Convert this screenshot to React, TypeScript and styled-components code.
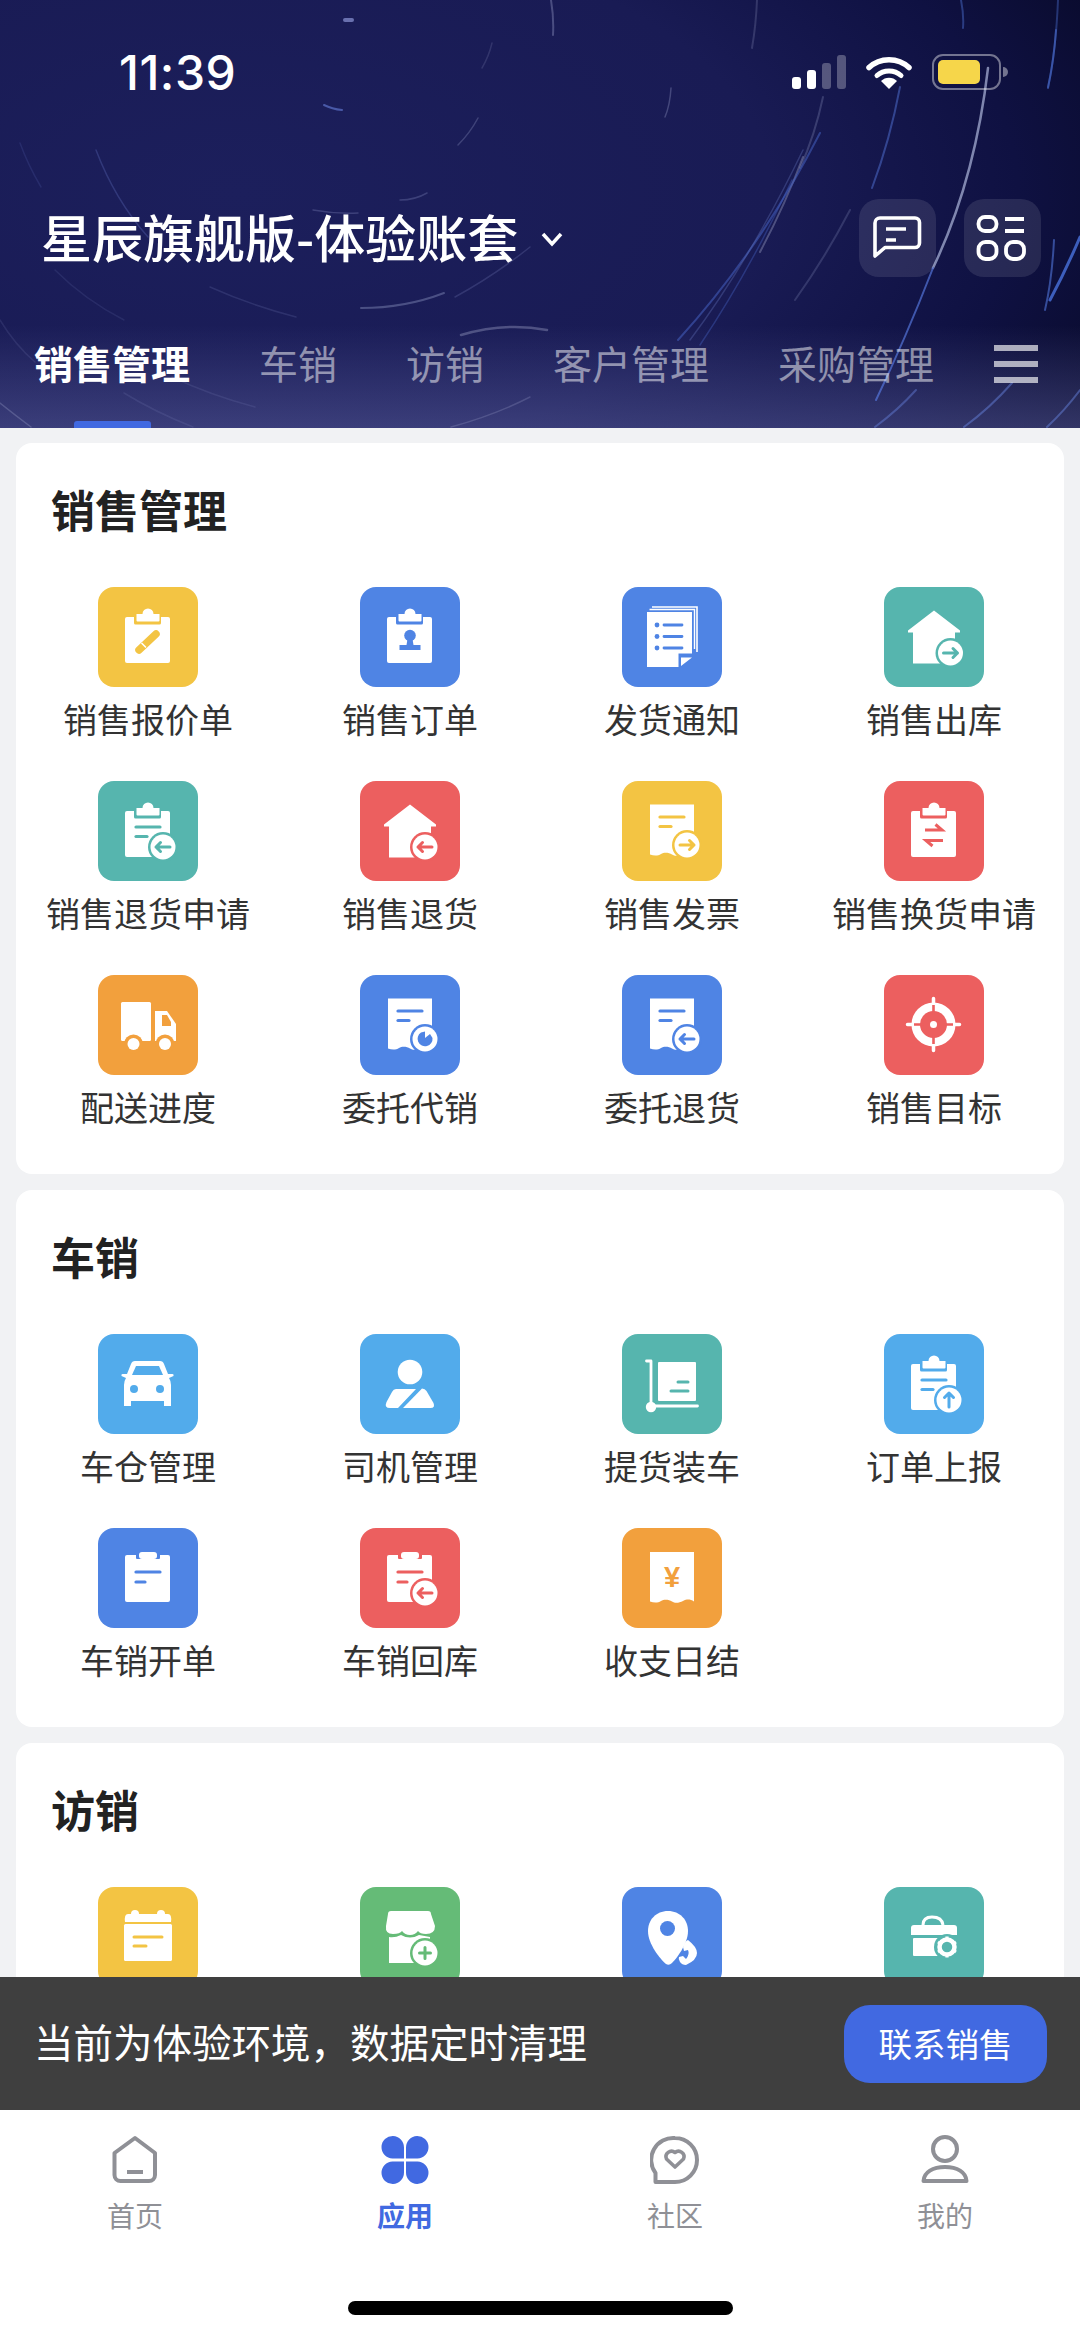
import React from 'react';
import styled, { createGlobalStyle } from 'styled-components';

const GlobalStyle = createGlobalStyle`
  html, body {
    margin: 0;
    padding: 0;
    background: #f1f2f4;
  }
  * {
    box-sizing: border-box;
  }
`;

const CJK = `"Noto Sans CJK SC", "Noto Sans", sans-serif`;

const Page = styled.div`
  width: 1080px;
  height: 2337px;
  display: flex;
  flex-direction: column;
  overflow: hidden;
  background: #f1f2f4;
  font-family: ${CJK};
`;

const Header = styled.header`
  position: relative;
  height: 428px;
  flex: none;
  overflow: hidden;
  background:
    linear-gradient(180deg, rgba(80, 85, 150, 0) 76%, rgba(92, 96, 160, 0.5) 100%),
    radial-gradient(ellipse 95% 120% at 22% 45%, #1c1f5c 0%, #191b54 52%, #0f1142 76%, #070823 100%);
`;

const Trails = styled.svg`
  position: absolute;
  inset: 0;
  width: 1080px;
  height: 428px;
  opacity: 0.8;
`;

const HeaderBody = styled.div`
  position: relative;
`;

const StatusBar = styled.div`
  height: 144px;
  display: flex;
  align-items: center;
  padding: 0 72px 0 119px;
`;

const Time = styled.span`
  font-family: Inter, Roboto, sans-serif;
  font-size: 48px;
  font-weight: 500;
  letter-spacing: 0.5px;
  color: #fff;
`;

const StatusIcons = styled.div`
  margin-left: auto;
  display: flex;
  align-items: center;
  gap: 20px;
`;

const SignalBars = styled.div`
  display: flex;
  align-items: flex-end;
  gap: 6px;
  height: 34px;
`;

const SignalBar = styled.span<{ $h: number; $on: boolean }>`
  width: 9px;
  height: ${(p) => p.$h}px;
  border-radius: 3px;
  background: ${(p) => (p.$on ? '#fff' : 'rgba(255, 255, 255, 0.28)')};
`;

const Battery = styled.div`
  position: relative;
  width: 69px;
  height: 36px;
  padding: 4px;
  border: 2px solid rgba(255, 255, 255, 0.42);
  border-radius: 11px;
  margin-right: 7px;

  &::after {
    content: '';
    position: absolute;
    right: -9px;
    top: 11px;
    width: 5px;
    height: 10px;
    border-radius: 0 5px 5px 0;
    background: rgba(255, 255, 255, 0.42);
  }
`;

const BatteryFill = styled.div`
  width: 42px;
  height: 100%;
  border-radius: 5px;
  background: #f6d64a;
`;

const TitleRow = styled.div`
  display: flex;
  align-items: center;
  height: 78px;
  margin-top: 55px;
  padding: 0 39px 0 41px;
`;

const Title = styled.h1`
  margin: -5px 0 0;
  font-size: 51px;
  line-height: 78px;
  font-weight: 500;
  color: #fff;
  white-space: nowrap;
`;

const Chevron = styled.svg`
  width: 24px;
  height: 16px;
  margin: 2px 0 0 22px;
`;

const ActionGroup = styled.div`
  display: flex;
  gap: 28px;
  margin-left: auto;
`;

const ActionButton = styled.div`
  width: 77px;
  height: 78px;
  border-radius: 20px;
  background: rgba(255, 255, 255, 0.1);
`;

const TabRow = styled.nav`
  display: flex;
  align-items: flex-start;
  height: 151px;
  padding: 56px 42px 0 34px;
`;

const TabList = styled.div`
  display: flex;
  gap: 69px;
`;

const Tab = styled.span<{ $active?: boolean }>`
  position: relative;
  font-size: 39px;
  line-height: 58px;
  font-weight: ${(p) => (p.$active ? 700 : 400)};
  color: ${(p) => (p.$active ? '#fff' : 'rgba(255, 255, 255, 0.5)')};
  white-space: nowrap;

  ${(p) =>
    p.$active &&
    `
    &::after {
      content: '';
      position: absolute;
      left: 40px;
      top: 88px;
      width: 77px;
      height: 7px;
      border-radius: 3px 3px 0 0;
      background: #4169e1;
    }
  `}
`;

const MenuIcon = styled.svg`
  flex: none;
  width: 44px;
  height: 38px;
  margin: 12px 0 0 auto;
`;

const Content = styled.main`
  flex: 1;
  min-height: 0;
  overflow: hidden;
  display: flex;
  flex-direction: column;
  gap: 16px;
  padding: 15px 16px 0;
`;

const Card = styled.section`
  flex: none;
  background: #fff;
  border-radius: 16px;
  padding: 36px 0 43px;
`;

const CardTitle = styled.h2`
  margin: 0 0 48px 35px;
  font-size: 44px;
  line-height: 60px;
  font-weight: 700;
  color: #222;
`;

const Grid = styled.div`
  display: grid;
  grid-template-columns: repeat(4, 262px);
  row-gap: 38px;
  padding-left: 1px;
`;

const Item = styled.div`
  display: flex;
  flex-direction: column;
  align-items: center;
`;

const Tile = styled.div<{ $color: string }>`
  width: 100px;
  height: 100px;
  border-radius: 16px;
  background: ${(p) => p.$color};
  color: ${(p) => p.$color};

  svg {
    display: block;
    width: 100%;
    height: 100%;
  }
`;

const ItemLabel = styled.span`
  margin-top: 9px;
  margin-bottom: 1px;
  font-size: 34px;
  line-height: 46px;
  color: #333;
  white-space: nowrap;
`;

const Banner = styled.div`
  flex: none;
  height: 133px;
  display: flex;
  align-items: center;
  justify-content: space-between;
  padding: 0 33px 0 34px;
  background: #3f3f3f;
`;

const BannerText = styled.span`
  margin-top: -6px;
  font-size: 39.5px;
  color: #fff;
  white-space: nowrap;
`;

const BannerButton = styled.button`
  width: 203px;
  height: 78px;
  padding-bottom: 3px;
  border: 0;
  border-radius: 26px;
  background: #4169e1;
  color: #fff;
  font-family: ${CJK};
  font-size: 33.5px;
`;

const Footer = styled.footer`
  flex: none;
  height: 227px;
  display: flex;
  flex-direction: column;
  background: #fff;
`;

const TabBar = styled.div`
  display: grid;
  grid-template-columns: repeat(4, 270px);
  padding-top: 25px;
`;

const BarItem = styled.div<{ $active?: boolean }>`
  display: flex;
  flex-direction: column;
  align-items: center;
  color: ${(p) => (p.$active ? '#4169e1' : '#8f9096')};

  svg {
    display: block;
    width: 50px;
    height: 50px;
  }
`;

const BarLabel = styled.span<{ $active?: boolean }>`
  margin-top: 12px;
  font-size: 28px;
  line-height: 36px;
  font-weight: ${(p) => (p.$active ? 700 : 400)};
`;

const HomeIndicator = styled.div`
  width: 385px;
  height: 14px;
  margin: auto auto 22px;
  border-radius: 7px;
  background: #000;
`;

const YELLOW = '#f3c443';
const BLUE = '#4f84e4';
const TEAL = '#56b5ae';
const RED = '#ec5f5f';
const ORANGE = '#f2a03d';
const SKY = '#52abeb';
const GREEN = '#65bb77';

type Trail = [string, string, number];

const trails: Trail[] = [
  ['M988 68Q975 180 933 268', 'rgba(190,200,235,.8)', 2.5],
  ['M933 268Q905 340 876 400', 'rgba(90,125,230,.8)', 2],
  ['M760 252Q785 205 803 157', 'rgba(190,195,225,.4)', 2],
  ['M800 168Q815 135 823 97', 'rgba(170,180,220,.3)', 2],
  ['M872 188Q890 140 900 87', 'rgba(85,120,220,.6)', 2],
  ['M795 300Q825 258 850 210', 'rgba(170,180,220,.25)', 2],
  ['M1048 88Q1054 60 1056 30', 'rgba(85,125,230,.65)', 2],
  ['M1058 0Q1056 50 1048 87', 'rgba(85,125,230,.45)', 2],
  ['M1050 300Q1066 270 1080 237', 'rgba(80,125,240,.9)', 3],
  ['M820 133Q760 250 678 340', 'rgba(80,115,220,.55)', 2],
  ['M803 150Q750 260 690 340', 'rgba(120,140,215,.35)', 1.5],
  ['M792 180Q750 270 700 345', 'rgba(80,115,220,.4)', 1.5],
  ['M1054 240Q1052 280 1045 310', 'rgba(85,125,230,.7)', 2],
  ['M961 0Q964 15 963 28', 'rgba(85,125,230,.5)', 2],
  ['M551 0Q554 18 553 35', 'rgba(180,185,225,.4)', 2],
  ['M757 0Q756 25 752 48', 'rgba(180,185,225,.25)', 2],
  ['M671 88Q670 105 665 117', 'rgba(180,185,225,.35)', 1.5],
  ['M492 43Q489 56 482 68', 'rgba(180,185,225,.2)', 1.5],
  ['M478 118Q470 133 458 145', 'rgba(180,185,225,.3)', 1.5],
  ['M324 105Q332 109 342 110', 'rgba(110,135,230,.7)', 2],
  ['M345 20L352 20', 'rgba(150,160,225,.8)', 4],
  ['M96 150Q115 200 148 237', 'rgba(110,125,210,.35)', 1.5],
  ['M20 143Q28 165 41 187', 'rgba(110,125,210,.2)', 1.5],
  ['M55 270Q85 300 124 320', 'rgba(150,160,220,.15)', 1.5],
  ['M210 287Q250 305 296 317', 'rgba(150,160,220,.2)', 1.5],
  ['M361 308Q405 308 444 293', 'rgba(180,190,230,.4)', 2],
  ['M461 335Q505 322 547 330', 'rgba(190,195,225,.4)', 2.5],
  ['M455 297Q495 275 530 247', 'rgba(150,160,220,.25)', 1.5],
  ['M400 200Q415 200 427 193', 'rgba(170,175,225,.3)', 1.5],
  ['M313 210Q335 214 358 213', 'rgba(170,175,225,.3)', 1.5],
  ['M0 403Q15 415 31 427', 'rgba(190,195,230,.3)', 1.5],
  ['M451 427Q495 415 530 397', 'rgba(190,195,230,.25)', 1.5],
  ['M964 427Q990 408 1012 383', 'rgba(110,140,235,.55)', 2],
  ['M1047 427Q1065 410 1080 390', 'rgba(110,140,235,.55)', 2],
  ['M875 427Q898 410 916 390', 'rgba(110,140,235,.5)', 2],
  ['M172 377Q210 395 255 407', 'rgba(170,175,225,.15)', 1.5],
  ['M124 393Q155 412 193 427', 'rgba(170,175,225,.15)', 1.5],
  ['M0 320Q15 345 35 362', 'rgba(170,175,225,.15)', 1.5],
];

const Body = ({ top = 30, bottom = 76 }: { top?: number; bottom?: number }) => (
  <rect x="27" y={top} width="45" height={bottom - top} rx="2" fill="#fff" />
);

const Clip = () => (
  <>
    <rect x="36" y="26" width="27" height="11.5" rx="1.5" fill="currentColor" />
    <path d="M38.500 33.500V27h6a5.500 5.500 0 0 1 11 0h6v6.500a1 1 0 0 1-1 1H39.500a1 1 0 0 1-1-1z" fill="#fff" />
  </>
);

const Lines = ({ y = 46, x1 = 37, x2 = 63, x3 = 50, gap = 9.5 }) => (
  <g stroke="currentColor" strokeWidth="3.2" strokeLinecap="round">
    <path d={`M${x1 + 1} ${y}H${x2 - 1}`} />
    <path d={`M${x1 + 1} ${y + gap}H${x3 - 1}`} />
  </g>
);

type BadgeKind = 'left' | 'right' | 'up' | 'clock' | 'plus';

const Badge = ({ cx = 65, cy = 66, kind }: { cx?: number; cy?: number; kind: BadgeKind }) => (
  <g>
    <circle cx={cx} cy={cy} r="15" fill="currentColor" />
    <circle cx={cx} cy={cy} r="12.5" fill="#fff" />
    <g stroke="currentColor" strokeWidth="3" strokeLinecap="round" strokeLinejoin="round" fill="none">
      {kind === 'left' && <path d={`M${cx + 7} ${cy}H${cx - 7}M${cx - 2.5} ${cy - 4.5}L${cx - 7} ${cy}L${cx - 2.5} ${cy + 4.5}`} />}
      {kind === 'right' && <path d={`M${cx - 7} ${cy}H${cx + 7}M${cx + 2.5} ${cy - 4.5}L${cx + 7} ${cy}L${cx + 2.5} ${cy + 4.5}`} />}
      {kind === 'up' && <path d={`M${cx} ${cy + 7}V${cy - 7}M${cx - 4.5} ${cy - 2.5}L${cx} ${cy - 7}L${cx + 4.5} ${cy - 2.5}`} />}
      {kind === 'plus' && <path d={`M${cx - 5.5} ${cy}H${cx + 5.5}M${cx} ${cy - 5.5}V${cy + 5.5}`} />}
    </g>
    {kind === 'clock' && (
      <path d={`M${cx} ${cy - 7.5}V${cy - 1}L${cx + 5} ${cy - 5}L${cx + 7.5} ${cy - 1}A7.5 7.5 0 1 1 ${cx - 4} ${cy - 6.5}Z`} fill="currentColor" />
    )}
  </g>
);

const House = () => (
  <path d="M50 23.5L76 43.5v2h-5V76.5H29V45.5h-5v-2z" fill="#fff" />
);

const Receipt = ({ top = 23.5 }: { top?: number }) => (
  <path
    d={`M28 ${top}H72V73.500C68 71 65 71 61 73S53 75.500 50 73.500S42 71 39 73S32 75 28 73.500Z`}
    fill="#fff"
  />
);

const IconPencil = () => (
  <svg viewBox="0 0 100 100">
    <Body />
    <Clip />
    <path d="M41 63L58 47" stroke="currentColor" strokeWidth="7.5" strokeLinecap="round" />
    <path d="M43.500 56L48 60.500" stroke="#fff" strokeWidth="1.6" />
  </svg>
);

const IconPerson = () => (
  <svg viewBox="0 0 100 100">
    <Body />
    <Clip />
    <circle cx="50" cy="48.5" r="5.8" fill="currentColor" />
    <path d="M47.500 52h5l1 6h7v5H39.500v-5h7z" fill="currentColor" />
  </svg>
);

const IconStack = () => (
  <svg viewBox="0 0 100 100">
    <path d="M30 20H75V65" fill="none" stroke="#fff" strokeWidth="1.6" />
    <path d="M27.500 22.500H72.500V62" fill="none" stroke="#fff" strokeWidth="1.4" />
    <path d="M25 25H70V66.500H56.500V80H25Z" fill="#fff" />
    <path d="M59 79L70 70.500H59Z" fill="#fff" />
    <g fill="currentColor">
      <circle cx="35" cy="38" r="2.4" />
      <circle cx="35" cy="49.5" r="2.4" />
      <circle cx="35" cy="61" r="2.4" />
    </g>
    <g stroke="currentColor" strokeWidth="2.8" strokeLinecap="round">
      <path d="M42 38H60M42 49.500H60M42 61H60" />
    </g>
  </svg>
);

const IconHouseBadge = ({ kind }: { kind: BadgeKind }) => (
  <svg viewBox="0 0 100 100">
    <House />
    <Badge kind={kind} cx={kind === 'right' ? 66.5 : 65} />
  </svg>
);

const IconClipBadge = ({ kind }: { kind: BadgeKind }) => (
  <svg viewBox="0 0 100 100">
    <Body />
    <Clip />
    <Lines />
    <Badge kind={kind} />
  </svg>
);

const IconReceiptBadge = ({ kind }: { kind: BadgeKind }) => (
  <svg viewBox="0 0 100 100">
    <Receipt />
    <Lines y={36} />
    <Badge kind={kind} cy={64} />
  </svg>
);

const IconSwap = () => (
  <svg viewBox="0 0 100 100">
    <Body />
    <Clip />
    <g stroke="currentColor" strokeWidth="3" fill="none">
      <path d="M41 49H58L51.500 43.500" />
      <path d="M59 59.500H42L48.500 65" />
    </g>
  </svg>
);

const IconTruck = () => (
  <svg viewBox="0 0 100 100">
    <rect x="23" y="27" width="30" height="39" rx="1.5" fill="#fff" />
    <path d="M57 36H69L78 49V66H57Z" fill="#fff" />
    <path d="M64 40H69L73 47V51H64Z" fill="currentColor" />
    <circle cx="35.5" cy="69" r="9.5" fill="currentColor" />
    <circle cx="35.5" cy="69" r="6" fill="#fff" />
    <circle cx="67" cy="69" r="9.5" fill="currentColor" />
    <circle cx="67" cy="69" r="6" fill="#fff" />
  </svg>
);

const IconTarget = () => (
  <svg viewBox="0 0 100 100">
    <circle cx="49.5" cy="49.5" r="22" fill="#fff" />
    <circle cx="49.5" cy="49.5" r="13.5" fill="currentColor" />
    <circle cx="49.5" cy="49.5" r="3.5" fill="#fff" />
    <path d="M49.500 23.500V28M49.500 71V75.500M23.500 49.500H28M71 49.500H75.500" stroke="#fff" strokeWidth="3.5" strokeLinecap="round" />
    <path d="M49.500 30V40M49.500 59V69M30 49.500H40M59 49.500H69" stroke="currentColor" strokeWidth="2.6" />
  </svg>
);

const IconCar = () => (
  <svg viewBox="0 0 100 100">
    <path
      d="M33 30Q34 27 37 27H62Q65 27 66 30L70 40H74.500Q76 40 75.500 42L71 44Q73 47 73 51V72H66V67H33V72H26V51Q26 47 28 44L23.500 42Q23 40 24.500 40H29Z"
      fill="#fff"
    />
    <path d="M38 32H61L65 41H34Z" fill="currentColor" />
    <circle cx="36" cy="55" r="4" fill="currentColor" />
    <circle cx="62" cy="55" r="4" fill="currentColor" />
  </svg>
);

const IconDriver = () => (
  <svg viewBox="0 0 100 100">
    <circle cx="50" cy="38" r="12.3" fill="#fff" />
    <path d="M36 55H56L38 74H30Q24 74 26.500 68L32 58Q33.500 55 36 55Z" fill="#fff" />
    <path d="M62 54.500Q65 54.500 66.500 57L73.500 69Q75.500 74 70.500 74H43Z" fill="#fff" />
  </svg>
);

const IconTrolley = () => (
  <svg viewBox="0 0 100 100">
    <path d="M24.500 27H29V72H75.500" fill="none" stroke="#fff" strokeWidth="2.8" strokeLinecap="round" strokeLinejoin="round" />
    <circle cx="29" cy="73" r="5.2" fill="#fff" />
    <rect x="36" y="28" width="38" height="39" rx="1" fill="#fff" />
    <path d="M56 48H66M49 57H66" stroke="currentColor" strokeWidth="3" strokeLinecap="round" />
  </svg>
);

const IconClipboardPlain = () => (
  <svg viewBox="0 0 100 100">
    <Body top={27} bottom={74} />
    <rect x="38" y="21" width="24" height="10" rx="1" fill="currentColor" />
    <rect x="41" y="24" width="18" height="7" rx="3" fill="#fff" />
    <Lines y={44} gap={10} x3={48} />
  </svg>
);

const IconClipReturn = () => (
  <svg viewBox="0 0 100 100">
    <Body top={27} bottom={74} />
    <rect x="38" y="21" width="24" height="10" rx="1" fill="currentColor" />
    <rect x="41" y="24" width="18" height="7" rx="3" fill="#fff" />
    <Lines y={44} gap={10} x3={48} />
    <Badge kind="left" cy={65} />
  </svg>
);

const IconYen = () => (
  <svg viewBox="0 0 100 100">
    <Receipt top={24} />
    <text x="50" y="59" fontSize="29" fontWeight="700" textAnchor="middle" fontFamily="Liberation Sans, sans-serif" fill="currentColor">
      ¥
    </text>
  </svg>
);

const IconCalendar = () => (
  <svg viewBox="0 0 100 100">
    <circle cx="37" cy="27" r="4" fill="#fff" />
    <circle cx="63" cy="27" r="4" fill="#fff" />
    <path d="M27 35Q26 27 30 27H70Q74 27 73 35Z" fill="#fff" />
    <rect x="26" y="37" width="48" height="37" rx="1.5" fill="#fff" />
    <path d="M36 50H64M36 59H48" stroke="currentColor" strokeWidth="3" strokeLinecap="round" />
  </svg>
);

const IconStore = () => (
  <svg viewBox="0 0 100 100">
    <path
      d="M31 24H68Q71 24 71 27L75 39Q75 47 66 47Q60 47 58 44Q55 48 50 48Q45 48 42 44Q40 47 33 47Q25 47 26 39L28 27Q28 24 31 24Z"
      fill="#fff"
    />
    <path d="M29 50Q35 51 41 48Q50 53 59 48L70 50V76H29Z" fill="#fff" />
    <Badge kind="plus" cx={65} cy={66} />
  </svg>
);

const IconPin = () => (
  <svg viewBox="0 0 100 100">
    <path d="M46 24C34 24 26 33 26 44C26 57 38 72 44 77Q47 79 50 76C54 72 66 57 66 44C66 33 58 24 46 24Z" fill="#fff" />
    <circle cx="45.5" cy="41.5" r="7.5" fill="currentColor" />
    <path
      d="M66 53Q75 60 75 66Q75 73 64 78Q60 78 58 75Q56 72 57 70L61 69L64 72Q68 67 66 63L62 64L61 60Q63 54 66 53Z"
      fill="#fff"
    />
  </svg>
);

const IconCase = () => (
  <svg viewBox="0 0 100 100">
    <path d="M39 38Q39 30 48 30Q58 30 59 38" fill="none" stroke="#fff" strokeWidth="3" />
    <path d="M30 38H70Q73 38 73 41V48H27V41Q27 38 30 38Z" fill="#fff" />
    <rect x="29" y="51" width="40" height="18" rx="1" fill="#fff" />
    <circle cx="63" cy="60" r="13" fill="currentColor" />
    <circle cx="63" cy="60" r="7.5" fill="none" stroke="#fff" strokeWidth="4.5" />
    <g stroke="#fff" strokeWidth="3.2">
      <path d="M63 49.500V53M63 67V70.500M54 55L57 56.800M69 63.200L72 65M54 65L57 63.200M69 56.800L72 55" />
    </g>
  </svg>
);

type Entry = { label?: string; color: string; icon: React.ReactNode };

const sections: { title: string; items: Entry[] }[] = [
  {
    title: '销售管理',
    items: [
      { label: '销售报价单', color: YELLOW, icon: <IconPencil /> },
      { label: '销售订单', color: BLUE, icon: <IconPerson /> },
      { label: '发货通知', color: BLUE, icon: <IconStack /> },
      { label: '销售出库', color: TEAL, icon: <IconHouseBadge kind="right" /> },
      { label: '销售退货申请', color: TEAL, icon: <IconClipBadge kind="left" /> },
      { label: '销售退货', color: RED, icon: <IconHouseBadge kind="left" /> },
      { label: '销售发票', color: YELLOW, icon: <IconReceiptBadge kind="right" /> },
      { label: '销售换货申请', color: RED, icon: <IconSwap /> },
      { label: '配送进度', color: ORANGE, icon: <IconTruck /> },
      { label: '委托代销', color: BLUE, icon: <IconReceiptBadge kind="clock" /> },
      { label: '委托退货', color: BLUE, icon: <IconReceiptBadge kind="left" /> },
      { label: '销售目标', color: RED, icon: <IconTarget /> },
    ],
  },
  {
    title: '车销',
    items: [
      { label: '车仓管理', color: SKY, icon: <IconCar /> },
      { label: '司机管理', color: SKY, icon: <IconDriver /> },
      { label: '提货装车', color: TEAL, icon: <IconTrolley /> },
      { label: '订单上报', color: SKY, icon: <IconClipBadge kind="up" /> },
      { label: '车销开单', color: BLUE, icon: <IconClipboardPlain /> },
      { label: '车销回库', color: RED, icon: <IconClipReturn /> },
      { label: '收支日结', color: ORANGE, icon: <IconYen /> },
    ],
  },
  {
    title: '访销',
    items: [
      { color: YELLOW, icon: <IconCalendar /> },
      { color: GREEN, icon: <IconStore /> },
      { color: BLUE, icon: <IconPin /> },
      { color: TEAL, icon: <IconCase /> },
    ],
  },
];

const tabs = ['销售管理', '车销', '访销', '客户管理', '采购管理'];

const Wifi = () => (
  <svg width="46" height="34" viewBox="0 0 46 34">
    <path d="M3 12.500C14 2 32 2 43 12.500" fill="none" stroke="#fff" strokeWidth="5.5" strokeLinecap="round" />
    <path d="M11 20.500C17.500 14.500 28.500 14.500 35 20.500" fill="none" stroke="#fff" strokeWidth="5" strokeLinecap="round" />
    <path d="M15 26C19 21.500 27 21.500 31 26L23 34Z" fill="#fff" />
  </svg>
);

const ChatIcon = () => (
  <svg viewBox="0 0 77 78" width="77" height="78">
    <path
      d="M16 57V24a5 5 0 0 1 5-5H56a4.500 4.500 0 0 1 4.500 4.500V44a4.500 4.500 0 0 1-4.500 4.500H26L16 57Z"
      fill="none"
      stroke="#fff"
      strokeWidth="3.6"
      strokeLinejoin="round"
    />
    <path d="M27 30H47M27 41H37" stroke="#fff" strokeWidth="3.6" />
  </svg>
);

const AppsIcon = () => (
  <svg viewBox="0 0 77 78" width="77" height="78">
    <g fill="none" stroke="#fff" strokeWidth="3.8">
      <rect x="14.500" y="18" width="18" height="14" rx="6.500" />
      <rect x="14.500" y="43" width="18" height="17" rx="7" />
      <rect x="42" y="43" width="18" height="17" rx="7" />
      <path d="M41 20H60M41 32H60" />
    </g>
  </svg>
);

const barItems = [
  {
    label: '首页',
    icon: (
      <svg viewBox="0 0 50 50">
        <path
          d="M4.500 18L25 3L45 18V40a6 6 0 0 1-6 6H10.500a6 6 0 0 1-6-6Z"
          fill="none"
          stroke="currentColor"
          strokeWidth="4"
          strokeLinejoin="round"
        />
        <path d="M17 37H33" stroke="currentColor" strokeWidth="4" />
      </svg>
    ),
  },
  {
    label: '应用',
    active: true,
    icon: (
      <svg viewBox="0 0 50 50">
        <g fill="currentColor">
          <path d="M13 1a11.500 11.500 0 0 1 11 11.500V23.500H12.500A11.250 11.250 0 0 1 13 1Z" />
          <path d="M37 1a11.500 11.500 0 0 0-11 11.500V23.500H37.500A11.250 11.250 0 0 0 37 1Z" />
          <path d="M13 49a11.500 11.500 0 0 0 11-11.500V26.500H12.500A11.250 11.250 0 0 0 13 49Z" />
          <path d="M37 49a11.500 11.500 0 0 1-11-11.500V26.500H37.500A11.250 11.250 0 0 1 37 49Z" />
        </g>
      </svg>
    ),
  },
  {
    label: '社区',
    icon: (
      <svg viewBox="0 0 50 50">
        <path
          d="M25 3a22 22 0 0 1 0 44H5.500V38A22 22 0 0 1 25 3Z"
          fill="none"
          stroke="currentColor"
          strokeWidth="4"
          strokeLinejoin="round"
        />
        <path
          d="M25 32L16.500 24A5.500 5.500 0 0 1 25 17.500A5.500 5.500 0 0 1 33.500 24Z"
          fill="none"
          stroke="currentColor"
          strokeWidth="3.6"
          strokeLinejoin="round"
        />
      </svg>
    ),
  },
  {
    label: '我的',
    icon: (
      <svg viewBox="0 0 50 50">
        <circle cx="25" cy="14" r="12" fill="none" stroke="currentColor" strokeWidth="4" />
        <path
          d="M3.500 46C4 37 13 32 25 32S46 37 46.500 46Z"
          fill="none"
          stroke="currentColor"
          strokeWidth="4"
          strokeLinejoin="round"
        />
      </svg>
    ),
  },
];

export default function App() {
  return (
    <Page>
      <GlobalStyle />
      <Header>
        <Trails viewBox="0 0 1080 428" fill="none" strokeLinecap="round">
          {trails.map(([d, stroke, width], i) => (
            <path key={i} d={d} stroke={stroke} strokeWidth={width} />
          ))}
        </Trails>
        <HeaderBody>
          <StatusBar>
            <Time>11:39</Time>
            <StatusIcons>
              <SignalBars>
                <SignalBar $h={12} $on />
                <SignalBar $h={19} $on />
                <SignalBar $h={26} $on={false} />
                <SignalBar $h={34} $on={false} />
              </SignalBars>
              <Wifi />
              <Battery>
                <BatteryFill />
              </Battery>
            </StatusIcons>
          </StatusBar>
          <TitleRow>
            <Title>星辰旗舰版-体验账套</Title>
            <Chevron viewBox="0 0 24 16">
              <path d="M3 3L12 13L21 3" fill="none" stroke="#fff" strokeWidth="3.5" />
            </Chevron>
            <ActionGroup>
              <ActionButton>
                <ChatIcon />
              </ActionButton>
              <ActionButton>
                <AppsIcon />
              </ActionButton>
            </ActionGroup>
          </TitleRow>
          <TabRow>
            <TabList>
              {tabs.map((t, i) => (
                <Tab key={t} $active={i === 0}>
                  {t}
                </Tab>
              ))}
            </TabList>
            <MenuIcon viewBox="0 0 44 38">
              <path d="M0 3H44M0 19H44M0 35H44" stroke="rgba(255,255,255,.65)" strokeWidth="6" />
            </MenuIcon>
          </TabRow>
        </HeaderBody>
      </Header>
      <Content>
        {sections.map((s) => (
          <Card key={s.title}>
            <CardTitle>{s.title}</CardTitle>
            <Grid>
              {s.items.map((it, i) => (
                <Item key={i}>
                  <Tile $color={it.color}>{it.icon}</Tile>
                  {it.label && <ItemLabel>{it.label}</ItemLabel>}
                </Item>
              ))}
            </Grid>
          </Card>
        ))}
      </Content>
      <Banner>
        <BannerText>当前为体验环境，数据定时清理</BannerText>
        <BannerButton>联系销售</BannerButton>
      </Banner>
      <Footer>
        <TabBar>
          {barItems.map((b) => (
            <BarItem key={b.label} $active={b.active}>
              {b.icon}
              <BarLabel $active={b.active}>{b.label}</BarLabel>
            </BarItem>
          ))}
        </TabBar>
        <HomeIndicator />
      </Footer>
    </Page>
  );
}
